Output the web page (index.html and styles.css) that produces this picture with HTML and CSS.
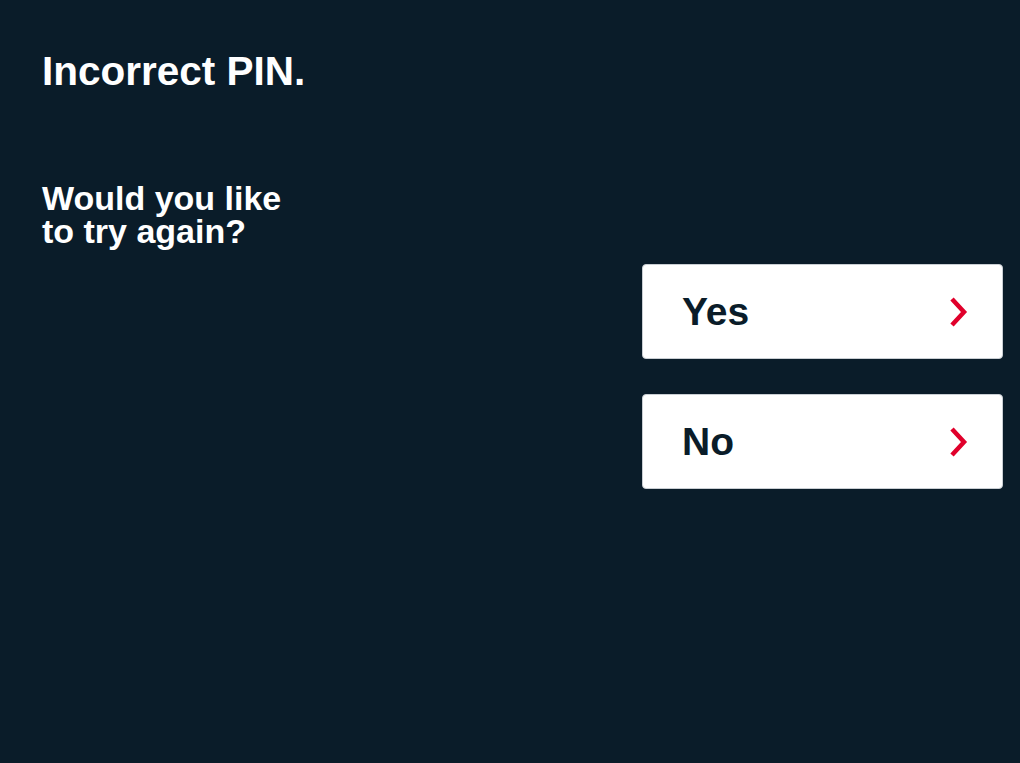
FILE: index.html
```html
<!DOCTYPE html>
<html lang="en">
<head>
<meta charset="utf-8">
<title>Incorrect PIN</title>
<link rel="stylesheet" href="styles.css">
</head>
<body>
<main class="screen">
  <h1 class="title">Incorrect PIN.</h1>
  <p class="question"><span class="line">Would you like</span><span class="line">to try again?</span></p>
  <div class="options">
    <button class="option" type="button">
      <span class="option-label">Yes</span>
      <svg class="chevron" width="19" height="30" viewBox="0 0 19 30" aria-hidden="true"><polyline points="3,2 15,15 3,28" fill="none" stroke="#e0002b" stroke-width="4.5" stroke-linejoin="miter" stroke-linecap="butt"/></svg>
    </button>
    <button class="option" type="button">
      <span class="option-label">No</span>
      <svg class="chevron" width="19" height="30" viewBox="0 0 19 30" aria-hidden="true"><polyline points="3,2 15,15 3,28" fill="none" stroke="#e0002b" stroke-width="4.5" stroke-linejoin="miter" stroke-linecap="butt"/></svg>
    </button>
  </div>
</main>
</body>
</html>
```
FILE: styles.css
```css
html, body {
  margin: 0;
  padding: 0;
  background: #0a1c29;
}

body {
  width: 1020px;
  height: 763px;
  overflow: hidden;
  font-family: "Liberation Sans", Arial, Helvetica, sans-serif;
  color: #ffffff;
}

.screen {
  display: flex;
  flex-direction: column;
  padding: 51px 17px 0 42px;
}

.title {
  margin: 0;
  font-size: 40.5px;
  line-height: 40px;
  font-weight: 700;
}

.question {
  margin: 91px 0 0 0;
  font-size: 34px;
  line-height: 33px;
  font-weight: 700;
  display: flex;
  flex-direction: column;
}

.line {
  display: block;
}

.options {
  align-self: flex-end;
  display: flex;
  flex-direction: column;
  gap: 35px;
  width: 361px;
  margin-top: 16px;
}

.option {
  display: flex;
  align-items: center;
  justify-content: space-between;
  box-sizing: border-box;
  height: 95px;
  width: 100%;
  padding: 0 34px 0 39px;
  margin: 0;
  background: #ffffff;
  border: 1px solid #c9ced3;
  border-radius: 4px;
  font-family: inherit;
  cursor: pointer;
}

.option-label {
  font-size: 39px;
  line-height: 40px;
  font-weight: 700;
  color: #0a1c29;
  padding-top: 1px;
}

.chevron {
  display: block;
  flex: none;
}
```
